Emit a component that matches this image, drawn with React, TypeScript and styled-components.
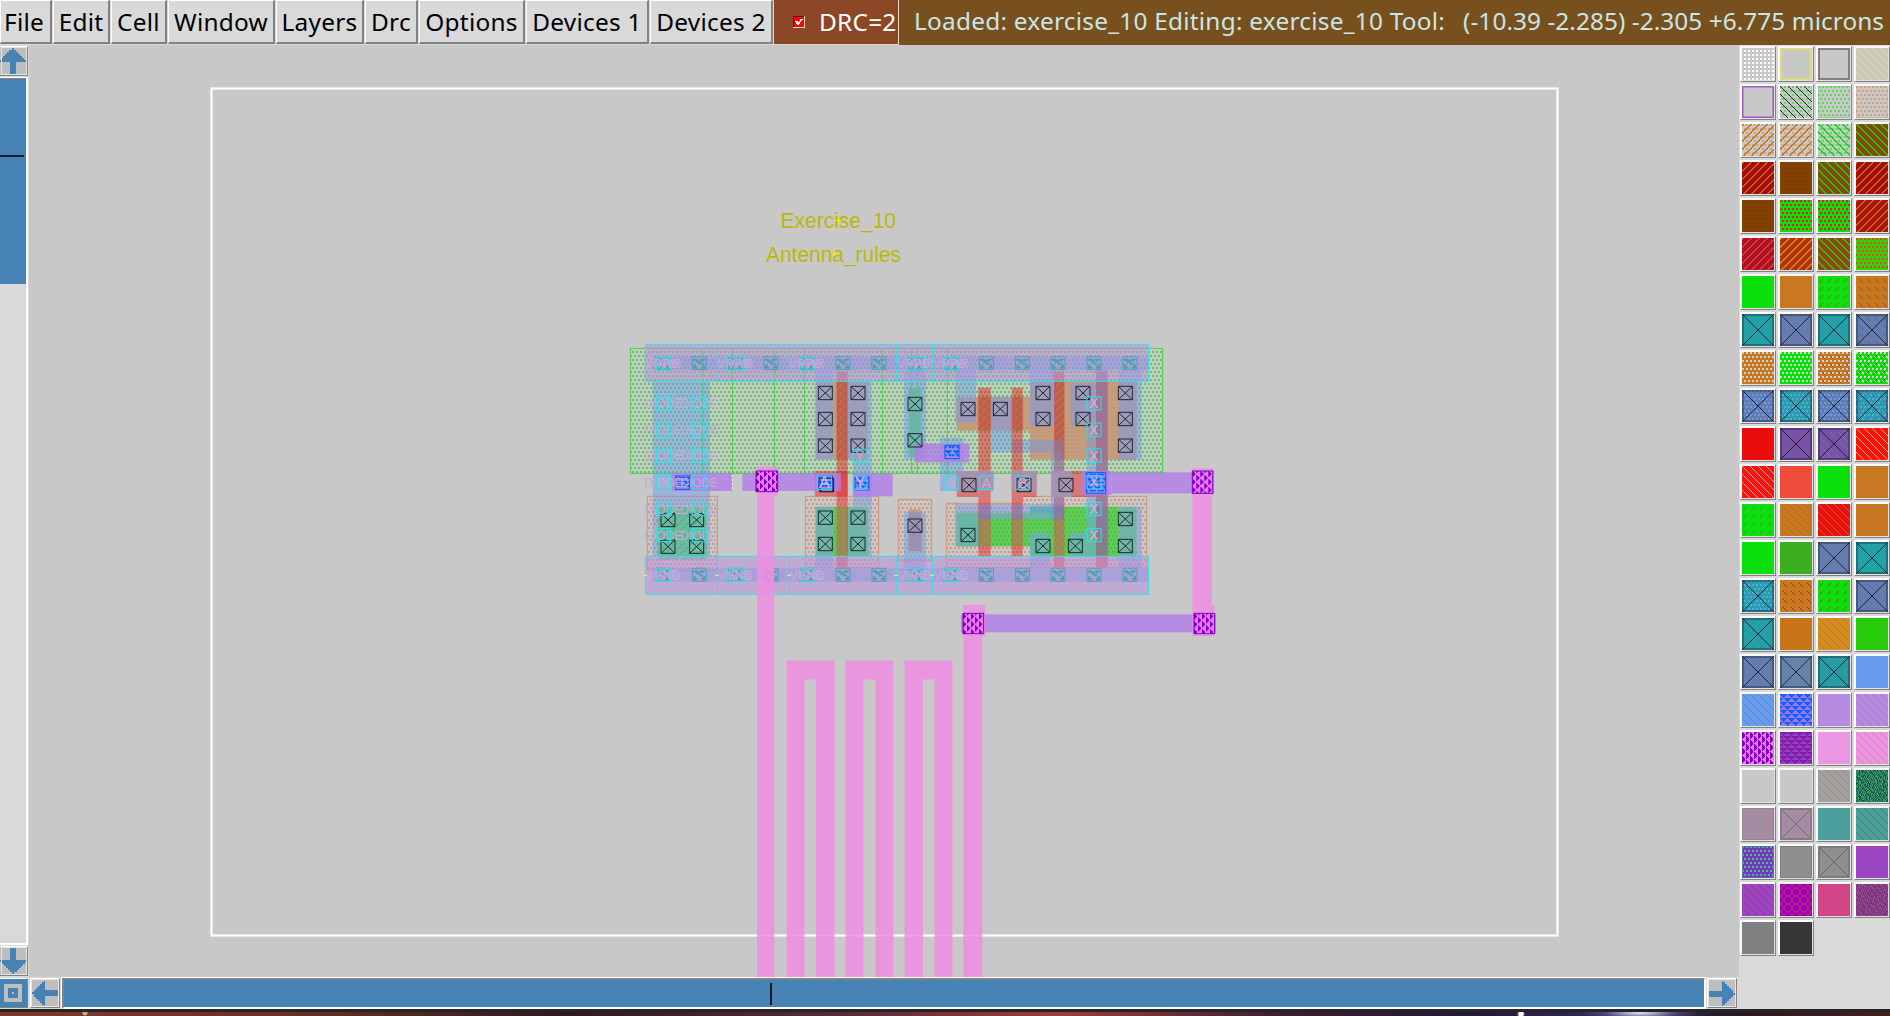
import React from 'react';
import styled, { createGlobalStyle } from 'styled-components';

const Global = createGlobalStyle`
  * { box-sizing: border-box; }
  body { margin: 0; overflow: hidden; background: #d9d9d9; }
`;
const Shell = styled.div`
  width: 1890px; height: 1016px; display: flex; flex-direction: column;
  font-family: "Noto Sans", "Open Sans", sans-serif; background: #d9d9d9;
`;
const MenuBar = styled.div`height: 45px; display: flex; flex: none; font-size: 24.4px; line-height: 42px; letter-spacing: 0.25px; white-space: pre;`;
const MenuButton = styled.div<{ $w: number }>`
  width: ${p => p.$w}px; height: 44px; display: flex; justify-content: center; color: #000; line-height: 41px;
  background: #d9d9d9; border: solid; border-width: 1px 2px 2px 1px;
  border-color: #fff #828282 #828282 #fff; margin-right: 1px;
  &:first-child { justify-content: flex-start; padding-left: 3px; }
`;
const DrcBox = styled.div`
  width: 125px; height: 45px; background: #8b4726; color: #fff; display: flex; align-items: center;
  padding: 0 0 1px 19px; gap: 14px; border-right: 1px solid #e8d8c8; border-bottom: 1px solid #e0d0c8;
`;
const Status = styled.div`flex: 1; height: 45px; background: #78501e; color: #c8e6e6; padding-left: 15px; display: flex;`;
const StatusText = styled.span<{ $gap?: number; $sp?: number }>`
  margin-left: ${p => p.$gap || 0}px; line-height: 42px; letter-spacing: ${p => p.$sp || 0}px;
`;
const Main = styled.div`height: 964px; display: flex;`;
const Left = styled.div`width: 1739px; display: flex; flex-direction: column;`;
const Upper = styled.div`height: 932px; display: flex; background: #c8c8c8;`;
const VBar = styled.div`width: 29px; display: flex; flex-direction: column; background: #d9d9d9;`;
const ArrowBox = styled.div<{ $w: number; $h: number }>`
  width: ${p => p.$w}px; height: ${p => p.$h}px; flex: none; background: #bebebe; border: solid; border-width: 1px 1px 1px 0;
  border-color: #fff #828282 #828282 #fff; outline: 1px solid #e6e6e6; outline-offset: -2px; display: flex;
`;
const VTrough = styled.div`
  width: 28px; height: 868px; flex: none; margin-top: 1px; border: solid #fff; border-width: 1px 2px 2px 0; background: #d9d9d9;
`;
const VThumb = styled.div`height: 206px; background: #4682b4; border-top: 1px solid #828282; padding-top: 76px;`;
const VMark = styled.div`height: 2px; width: 24px; background: #101820;`;
const Lower = styled.div`height: 32px; display: flex; align-items: center; background: #d9d9d9;`;
const HTrough = styled.div`
  width: 1646px; height: 31px; background: #4682b4; border: solid; border-width: 2px 1px 2px 2px;
  border-color: #828282 #fff #fff #828282; outline: 1px solid #fff; padding-left: 706px;
`;
const HMark = styled.div`width: 2px; height: 22px; margin-top: 3px; background: #101820;`;
const Palette = styled.div`
  width: 151px; display: grid; grid-template-columns: repeat(4, 36px); grid-auto-rows: 36px; gap: 2px;
  padding: 1px 0 0 1px; align-content: start; background: #d9d9d9; overflow: hidden;
`;
const Cell = styled.div`
  width: 36px; height: 36px; background: #e0e0e0; border: 1px solid; border-color: #fff #828282 #828282 #fff;
  box-shadow: inset 1px 1px 0 #f8f8f8; padding: 1px;
  svg { display: block; }
`;
const Desktop = styled.div`
  height: 7px; border-top: 3px solid #252528;
  background: radial-gradient(ellipse 60px 8px at 1640px 1px, #dfe4fa, #6458a088 60%, transparent),
    radial-gradient(circle at 1521px 2px, #fff 0 2px, transparent 4px),
    radial-gradient(circle at 85px 1px, #c8b078 0 2px, transparent 3px),
    linear-gradient(90deg, #7a3c2a, #6c3023 15%, #301820 30%, #5c2a38 45%, #9a4038 56%, #3c1c30 68%, #241838 78%, #342c60 86%, #281820 92%, #4a1e1c);
`;

/* ---------- palette swatches ---------- */
type Pred = (x: number, y: number) => boolean;
const m = (a: number, n: number) => ((a % n) + n) % n;
const preds: Record<string, Pred> = {
  grid: (x, y) => x > 1 && y > 1 && m(x, 4) > 1 && m(y, 4) > 1,
  dots: (x, y) => m(y, 4) < 2 && m(x + (m(y, 8) < 4 ? 0 : 2), 4) < 2,
  bs: (x, y) => m(x - y, 8) === 0,
  BS: (x, y) => m(x - y, 8) < 2,
  fs: (x, y) => m(x + y, 8) === 0,
  FS: (x, y) => m(x + y, 8) < 2,
  fd: (x, y) => m(x + y, 8) === 7 && m(y, 8) > 2 && m(y, 8) < 7,
  bd: (x, y) => m(x - y, 8) === 0 && m(y, 8) > 2 && m(y, 8) < 7,
  tri: (x, y) => { const r = m(y, 4); const c = m(x + (m(y, 8) < 4 ? 0 : 4), 8); return c >= r && c < 7 - r; },
  vtri: (x, y) => { const r = m(x, 4); const c = m(y + (m(x, 8) < 4 ? 0 : 4), 8); return r < 3 && c >= r && c < 7 - r; },
  weave: (x, y) => m(x * 3 + y * 5 + (x & y), 7) < 3 || (m(x - y, 6) === 0),
  ring: (x, y) => { const a = m(x, 8) - 3.5, b = m(y, 8) - 3.5, d = Math.abs(a) + Math.abs(b); return d > 2 && d < 5; },
  x: (x, y) => Math.abs(x - y) < 1 || Math.abs(x + y - 31) < 1,
  edge: (x, y) => x < 1 || y < 1 || x > 30 || y > 30,
  edge2: (x, y) => x < 2 || y < 2 || x > 29 || y > 29,
  lines: (_x, y) => m(y, 4) === 1,
};
const cache: Record<string, string> = {};
function pixels(kind: string): string {
  if (cache[kind]) return cache[kind];
  let d = '';
  for (let y = 0; y < 32; y++) {
    let s = -1;
    for (let x = 0; x <= 32; x++) {
      const on = x < 32 && preds[kind](x, y);
      if (on && s < 0) s = x;
      if (!on && s >= 0) { d += `M${s} ${y}h${x - s}v1h${s - x}z`; s = -1; }
    }
  }
  return (cache[kind] = d);
}
const G = '#0ce00c', O = '#c87820', T = '#22a2a6', S = '#667cae', X = 'edge2:#1a283866 x:#1a2838', B = '#c8c8c8';
const swatches: string[] = [
  `${B} grid:#fff`, `${B} edge2:#dcdc78`, `${B} edge2:#808080`, `${B} bs:#e6e650`,
  `${B} edge:#a050c8 edge2:#a064c899`, `${B} dots:#64d264 bs:#203020`, `${B} dots:#64d264 edge:#64d26480`, `${B} dots:#d2a078 edge:#d2a07880`,
  `${B} dots:#d2a078 FS:${O}`, `${B} dots:#d2a078 FS:${O}`, `${B} dots:#64d264 BS:${G}`, `#8c460a BS:#10d010`,
  `#a50c0c FS:#c86418`, `#804000 dots:#864408`, `#8c460a BS:#10d010`, `#a50c0c FS:#c86418`,
  `#804000 dots:#864408`, `${G} dots:#f01818`, `${G} dots:#f01818 fd:#704808`, `#aa140c FS:#c86418`,
  `#b40c28 FS:#c84830`, `#b4320c FS:#d08818`, `#964610 BS:#20c810`, `#32d20a dots:#f04020`,
  G, O, `${G} fd:#706010`, `${O} bd:#905020`,
  `${T} ${X}`, `${S} ${X}`, `${T} fd:#4080a0 ${X}`, `${S} bd:#5060a0 ${X}`,
  `${O} dots:#d0d0d0`, `${G} dots:#d0d0d0`, `${O} dots:#d0d0d0 bd:#905020`, `${G} dots:#d0d0d0 fd:#804020`,
  `${S} dots:#649cf0 ${X}`, `${T} dots:#649cf0 ${X}`, `${S} dots:#649cf0 bd:#4878c0 ${X}`, `${T} dots:#649cf0 fd:#7850b0 ${X}`,
  '#eb0c0c', '#7852a5 edge2:#28183c66 x:#28183c', '#7852a5 bs:#6878b0 edge2:#28183c66 x:#28183c', '#fa1408 bs:#e0b090',
  '#fa1408 bs:#a0b0d8', '#f04c3c', G, `${O} bd:#c27420`,
  `${G} fd:#20a818`, `${O} bd:#a86420`, '#eb1010 bs:#d06418', `${O} bs:#c07020`,
  G, '#40aa20 fs:#20c818', `${S} ${X}`, `${T} ${X}`,
  `${T} dots:#649cf0 ${X}`, `${O} bd:#904010`, `${G} fd:#805010`, `${S} bd:#5070a0 ${X}`,
  `${T} fd:#5070b0 ${X}`, '#c87418', '#d28c20 bs:#c47a20', '#26cc0c fs:#32c80c',
  `${S} ${X}`, `#6484aa ${X}`, `#289ca2 ${X}`, '#669ced',
  '#669ced bs:#6484b8', '#9878e8 tri:#1460ff', '#b78ae2', '#b78ae2 bs:#a478c0',
  '#e678f0 vtri:#8200c0', '#9840c8 tri:#8414b8 lines:#803090', '#eb96e2', '#eb96e2 bs:#e07ca8',
  B, B, '#a0a0a0 bs:#a88870', '#40908c weave:#106828',
  '#a48ca2 edge:#988298', '#a48ca2 x:#707070 edge2:#8c788c', '#4a9e9c', '#4a9e9c bs:#408860',
  '#743cb4 dots:#50b4a8 edge:#4c78b4', '#8e8e8e edge:#808080', '#8e8e8e x:#686868 edge2:#7c7c7c', '#9c46c4',
  '#9c46c4 bs:#a03080', '#9400b4 ring:#c01890', '#d24688', '#7c2898 weave:#8c5470',
  '#808080', '#363636',
];
function Swatch({ spec }: { spec: string }) {
  const [bg, ...layers] = spec.split(' ');
  return (
    <Cell>
      <svg width="32" height="32" shapeRendering="crispEdges">
        <rect width="32" height="32" fill={bg} />
        {layers.map((l, i) => { const [k, c] = l.split(':'); return <path key={i} d={pixels(k)} fill={c} />; })}
      </svg>
    </Cell>
  );
}

/* ---------- chip layout drawing; units are a third of a pixel ---------- */
const metal = 'rgba(100,150,240,.42)', poly = 'rgba(235,20,20,.45)', ndiff = 'rgba(10,210,10,.58)', pdiff = 'rgba(198,150,118,.9)';
const slate = 'rgba(154,154,190,.92)', teal = 'rgba(106,180,166,.95)', violet = 'rgba(178,124,232,.8)', mauve = 'rgba(165,146,178,.95)', pink = 'rgba(240,142,226,.86)';
type Box = [number, number, number, number, string];
const R = (dx: number, list: Box[]): Box[] => list.map(([a, b, c, d, f]) => [a + dx, b, c + dx, d, f]);
const shapes: Box[] = [
  [98, 139, 270, 664, metal], [113, 515, 260, 674, 'rgba(90,190,140,.7)'], [113, 515, 260, 674, 'url(#fsg)'],
  [640, 139, 683, 374, pdiff], [586, 139, 640, 374, slate], [680, 139, 745, 374, slate], [745, 139, 755, 374, metal],
  [586, 104, 640, 139, metal], [584, 408, 683, 484, poly],
  [638, 515, 683, 664, ndiff], [586, 515, 638, 664, teal], [680, 515, 745, 664, teal], [745, 515, 755, 664, metal], [699, 374, 755, 515, metal],
  [586, 664, 638, 697, metal], [650, 110, 683, 697, poly], [650, 139, 680, 374, 'url(#fso)'], [650, 515, 680, 664, 'url(#bsg)'],
  [155, 414, 337, 468, violet], [367, 414, 663, 468, violet], [699, 414, 818, 484, violet],
  ...R(780, [
    [72, 104, 138, 374, metal], [86, 160, 124, 364, teal], [180, 308, 250, 468, metal], [104, 326, 268, 382, violet],
    [225, 104, 288, 262, metal], [230, 186, 450, 287, pdiff], [450, 139, 770, 374, pdiff],
    [230, 186, 288, 262, slate], [332, 186, 398, 287, slate], [332, 287, 396, 352, metal], [396, 314, 550, 352, metal],
    [450, 139, 525, 272, slate], [450, 104, 525, 139, metal], [572, 145, 648, 272, slate], [716, 139, 770, 374, slate], [716, 104, 785, 139, metal], [770, 139, 785, 374, metal],
    [230, 535, 450, 634, ndiff], [450, 515, 716, 664, ndiff],
    [230, 535, 298, 634, teal], [298, 535, 457, 553, teal], [457, 515, 550, 553, teal], [450, 592, 508, 664, teal],
    [570, 592, 648, 664, teal], [620, 515, 680, 592, teal], [716, 515, 770, 664, teal], [770, 515, 785, 697, metal], [716, 664, 770, 697, metal],
    [225, 508, 230, 634, metal], [230, 508, 550, 535, metal], [450, 664, 508, 697, metal],
    [295, 158, 332, 664, poly], [395, 158, 428, 664, poly], [522, 110, 553, 697, poly], [648, 110, 683, 697, poly],
    [230, 408, 295, 486, poly], [428, 408, 470, 486, poly], [553, 408, 648, 486, poly],
    [295, 186, 332, 287, 'url(#fso)'], [398, 186, 428, 287, 'url(#fso)'], [525, 139, 553, 374, 'url(#fso)'],
    [298, 553, 332, 634, 'url(#bsg)'], [398, 553, 428, 634, 'url(#bsg)'], [522, 553, 553, 664, 'url(#bsg)'],
    [513, 352, 550, 553, metal], [522, 314, 550, 374, 'rgba(140,125,160,.6)'], [298, 508, 332, 553, metal], [398, 508, 428, 553, metal], [620, 272, 648, 515, metal], [648, 104, 683, 664, 'rgba(125,130,190,.62)'],
    [230, 408, 341, 468, mauve], [395, 408, 470, 468, mauve], [513, 408, 577, 486, mauve],
    [603, 408, 694, 480, violet], [694, 412, 937, 475, violet],
    [86, 523, 124, 648, pdiff], [72, 532, 138, 700, metal], [86, 532, 124, 648, 'rgba(150,140,175,.6)'],
    [243, 838, 1008, 892, violet],
  ]),
];
const xs: [number, number][] = [
  [144, 555], [230, 555], [144, 635], [230, 635], [616, 174], [714, 174], [616, 252], [714, 252], [616, 332], [714, 332],
  [616, 548], [714, 548], [616, 627], [714, 627], [620, 450],
  ...([[105, 207], [105, 316], [264, 222], [361, 222], [489, 174], [489, 252], [609, 174], [609, 252], [736, 174], [736, 252], [736, 332],
    [267, 450], [432, 450], [558, 450], [264, 600], [489, 633], [586, 633], [736, 552], [736, 633], [105, 572]] as [number, number][]).map(([a, b]) => [a + 780, b] as [number, number]),
];
const pinkShapes: Box[] = [
  [411, 395, 473, 482, pink], [411, 482, 463, 1926, pink],
  ...R(780, [[937, 400, 1000, 482, pink], [937, 482, 995, 810, pink], [937, 810, 1003, 903, pink], [249, 810, 316, 903, pink], [250, 903, 307, 1926, pink]]),
];
const cols = [130, 238, 346, 453, 561, 669, 777, 885, 993, 1099, 1207, 1314, 1422, 1530];
const named = [130, 346, 561, 885, 993];
const Rc = ({ b }: { b: Box }) => <rect x={b[0]} y={b[1]} width={b[2] - b[0]} height={b[3] - b[1]} fill={b[4]} />;
const Lab = ({ x, y, t, s = 36, c = '#c2acd8' }: { x: number; y: number; t: string; s?: number; c?: string }) => (
  <text x={x} y={y + s * 0.36} fontSize={s} fill={c} textAnchor="middle" fontFamily="Liberation Sans, Arial, sans-serif">{t}</text>
);
const Cyan = ({ x, y, w = 42 }: { x: number; y: number; w?: number }) => (
  <rect x={x - w / 2} y={y - 20} width={w} height="40" fill="none" stroke="#28e6e6" strokeWidth="3" />
);
const Via = ({ x, y, w, h, p, c }: { x: number; y: number; w: number; h: number; p: string; c: string }) => (
  <g transform={`translate(${x} ${y})`}><rect width={w} height={h} fill={`url(#${p})`} stroke={c} strokeWidth="3" /></g>
);
const BlueVia = ({ x, y, w = 42, h = 40 }: { x: number; y: number; w?: number; h?: number }) => (
  <Via x={x} y={y} w={w} h={h} p="vb" c="#0c5cff" />
);

function ChipCanvas() {
  return (
    <svg width="1710" height="932" viewBox="29 45 1710 932">
      <defs>
        <pattern id="dg" width="12" height="24" patternUnits="userSpaceOnUse"><path d="M0 0h6v6h-6zM6 12h6v6h-6z" fill="#50d050" /></pattern>
        <pattern id="do" width="12" height="24" patternUnits="userSpaceOnUse"><path d="M0 0h6v6h-6zM6 12h6v6h-6z" fill="#d29a80" /></pattern>
        <pattern id="fso" width="24" height="24" patternUnits="userSpaceOnUse"><rect width="24" height="24" fill="#b4604abb" /><path d="M0 24L24 0" stroke="#c07c48" strokeWidth="3" /></pattern>
        <pattern id="bsg" width="24" height="24" patternUnits="userSpaceOnUse"><rect width="24" height="24" fill="#b0886899" /><path d="M0 0L24 24" stroke="#58b850" strokeWidth="3" /></pattern>
        <pattern id="fsg" width="24" height="24" patternUnits="userSpaceOnUse"><path d="M0 24L24 0" stroke="#40b878" strokeWidth="3" /></pattern>
        <pattern id="vp" width="24" height="24" patternUnits="userSpaceOnUse"><rect width="24" height="24" fill="#e67cf0" /><path d="M0 0h3v3h3v3h3v6h-3v3h-3v3h-3zM12 12h3v3h3v3h3v6h-9zM12 0h6v3h-3v3h-3z" fill="#8200c8" /></pattern>
        <pattern id="vb" width="24" height="24" patternUnits="userSpaceOnUse"><rect width="24" height="24" fill="#8c96ee" /><path d="M0 3h6v3h-3v3h-3zM9 3h15v6h-3v-3h-3v3h-6v-3h-3zM0 15h21v3h-3v3h-3v3h-9v-3h-3v-3h-3z" fill="#0c5cff" /></pattern>
        <pattern id="vt" width="42" height="39" patternUnits="userSpaceOnUse"><path d="M3 6h12v3h3v3h3v-3h3v-3h15v3h-3v3h-3v3h-6v-3h-3v6h6v3h3v3h-12v-3h-3v-3h-6v-3h-3v-3h-6zM3 24h6v3h3v3h3v6h-12zM39 24h-6v3h-3v3h-3v6h12z" fill="#50a0ac" /></pattern>
      </defs>
      <rect x="211.5" y="88.5" width="1346" height="847" fill="none" stroke="#e4e4e4" strokeWidth="3" />
      <rect x="211.5" y="88.5" width="1346" height="847" fill="none" stroke="#fff" strokeWidth="1.4" />
      <g fill="#b9b90a" fontSize="22" fontFamily="Liberation Sans, Arial, sans-serif">
        <text x="780.5" y="228" textLength="115.5" lengthAdjust="spacingAndGlyphs">Exercise_10</text>
        <text x="766" y="262" textLength="135" lengthAdjust="spacingAndGlyphs">Antenna_rules</text>
      </g>
      <path d="M836 220.5h5M838.5 218v5M832 253.500h5M834.500 251v5" stroke="#f4f400" />
      <g transform="translate(620 335) scale(.333333)">
        <rect x="31" y="40" width="1597" height="375" fill="url(#dg)" stroke="#46d246" strokeWidth="3" />
        <path d="M248 40V415M337 40V415M463 40V415M553 40V415M787 40V415M875 40V415M892 40V415M982 40V415" stroke="#46d246" strokeWidth="3" />
        <g fill="url(#do)" stroke="#d2967a" strokeWidth="3">
          <path d="M82 484H292V706H82zM556 484H776V697H556zM835 493H935V677H835zM979 505H1208V484H1580V697H979z" />
        </g>
        {shapes.map((b, i) => <Rc key={i} b={b} />)}
        {[[28, 111, 65], [664, 114, 700]].map(([y, h, iy]) => (
          <g key={y}>
            <rect x="76" y={y} width="1510" height={h} fill="rgba(186,146,220,.55)" />
            <rect x="98" y={iy} width="1488" height="40" fill="rgba(135,145,232,.4)" />
            <path d={`M76 ${y}H1586V${y + h}H76zM292 ${y}v${h}M508 ${y}v${h}M829 ${y}v${h}M937 ${y}v${h}`} fill="none" stroke="#28e6e6" strokeWidth="3" />
            {cols.map(x => <Via key={x} x={x - 21} y={iy} w={42} h={39} p="vt" c="#50a0b4" />)}
            {named.map(x => <Cyan key={x} x={x} y={iy + 20} w={x === 346 || x === 885 ? 56 : 42} />)}
            {named.map(x => <Lab key={x} x={x} y={iy + 22} t={y < 100 ? 'VPWR' : 'VGND'} />)}
            {named.map(x => <Lab key={x} x={x + 10} y={iy + 20} t={y < 100 ? 'VPB' : 'VNB'} />)}
          </g>
        ))}
        <path d="M69 721h12M285 721h12M501 721h12M822 721h12M930 721h12" stroke="#f0f080" strokeWidth="3" />
        <path d="M337 420v48" stroke="#f4f4f4" strokeWidth="3" strokeDasharray="7 5" />
        {xs.map(([x, y], i) => <path key={i} d={`M${x - 21} ${y - 20}h42v40h-42zl42 40m0 -40l-42 40`} fill="none" stroke="#1c2830" strokeWidth="3" />)}
        {pinkShapes.map((b, i) => <Rc key={i} b={b} />)}
        <Via x={408} y={408} w={65} h={62} p="vp" c="#8200c8" />
        <Via x={1717} y={408} w={62} h={67} p="vp" c="#8200c8" />
        <Via x={1722} y={835} w={62} h={61} p="vp" c="#8200c8" />
        <Via x={1029} y={835} w={62} h={61} p="vp" c="#8200c8" />
        <BlueVia x={167} y={423} /><BlueVia x={595} y={423} /><BlueVia x={705} y={425} />
        <BlueVia x={975} y={331} /><BlueVia x={1399} y={413} w={58} h={62} />
        <path d="M600 430h40v40h-40z" fill="none" stroke="#1c2830" strokeWidth="3" />
        {[206, 285, 363, 443, 523, 601].map(y => (
          <g key={y}>
            <Lab x={130} y={y} t="DIODE" /><Lab x={238} y={y} t="DIODE" />
            <Cyan x={130} y={y - 1} /><Cyan x={238} y={y - 1} />
            <Lab x={1422} y={y - 1} t="X" s={42} c="#ceb6e0" /><Cyan x={1422} y={y - 1} />
          </g>
        ))}
        <Lab x={613} y={443} t="A" s={48} c="#d4bce8" /><Cyan x={613} y={443} />
        <Lab x={720} y={443} t="Y" s={48} c="#d4bce8" /><Cyan x={720} y={443} />
        <Lab x={720} y={363} t="Y" s={44} /><Cyan x={720} y={363} />
        <Lab x={993} y={443} t="A" s={42} /><Cyan x={993} y={443} />
        <Lab x={1099} y={443} t="A" s={42} /><Cyan x={1099} y={443} />
        <Lab x={1208} y={443} t="B" s={42} /><Cyan x={1208} y={443} />
      </g>
      <path d="M786.500 660.500h48v317h-18.500v-298h-11.500v298h-18zM845.500 660.500h48v317h-18v-298h-12v298h-18zM904.500 660.500h48v317h-18v-298h-11.500v298h-18.500z" fill={pink} />
    </svg>
  );
}

const Arrow = ({ dir }: { dir: number }) => (
  <svg width="27" height="27" viewBox="0 0 27 27" shapeRendering="crispEdges">
    <path transform={`rotate(${dir} 13.5 13.5)`} d="M13 0h2v2h2v2h2v2h2v2h2v2h2v2h2v2H17v13h-6V14H0v-2h2v-2h2V8h2V6h2V4h2V2h3z" fill="#4682b4" />
  </svg>
);
const VArrow = styled.div<{ $top: number; $ml: number }>`height: 27px; margin: ${p => p.$top}px 0 0 ${p => p.$ml}px;`;
const Pan = styled.div`width: 28px; height: 30px; margin-right: 2px; background: #4682b4; border: solid; border-width: 1px 1px 1px 0; border-color: #fff #828282 #828282 #fff; svg { display: block; }`;
const HArrow = styled(ArrowBox)<{ $ml?: number }>`
  border-left-width: 1px; margin: 0 2px 0 ${p => p.$ml || 0}px;
  svg { display: block; margin: 1px; }
`;
const VArrowBox = styled(ArrowBox)`margin-top: 1px;`;

export default function App() {
  const menu: [string, number][] = [['File', 52], ['Edit', 57], ['Cell', 56], ['Window', 107], ['Layers', 88], ['Drc', 53], ['Options', 106], ['Devices 1', 123], ['Devices 2', 123]];
  return (
    <>
      <Global />
      <Shell>
        <MenuBar>
          {menu.map(([t, w]) => <MenuButton key={t} $w={w}>{t}</MenuButton>)}
          <DrcBox>
            <svg width="12" height="12" shapeRendering="crispEdges">
              <rect width="12" height="12" fill="#e8d0c0" /><rect width="11" height="11" fill="#601808" /><rect x="1" y="1" width="10" height="10" fill="#f00" />
              <path d="M3 5l2 3 4-5" fill="none" stroke="#fff" strokeWidth="2" />
            </svg>
            <span>DRC=2</span>
          </DrcBox>
          <Status>
            <StatusText $sp={0.24}>Loaded: exercise_10 Editing: exercise_10 Tool:</StatusText>
            <StatusText $gap={18} $sp={0.06}>(-10.39 -2.285) -2.305 +6.775 microns</StatusText>
          </Status>
        </MenuBar>
        <Main>
          <Left>
            <Upper>
              <VBar>
                <VArrowBox $w={28} $h={30}><VArrow $top={1} $ml={-1}><Arrow dir={0} /></VArrow></VArrowBox>
                <VTrough><VThumb><VMark /></VThumb></VTrough>
                <VArrowBox $w={28} $h={30}><VArrow $top={0} $ml={0}><Arrow dir={180} /></VArrow></VArrowBox>
              </VBar>
              <ChipCanvas />
            </Upper>
            <Lower>
              <Pan>
                <svg width="27" height="28" shapeRendering="crispEdges">
                  <rect width="27" height="28" fill="#4682b4" /><rect x="4" y="5" width="18" height="18" fill="#bebebe" />
                  <rect x="8" y="9" width="10" height="10" fill="#4682b4" /><rect x="12" y="13" width="2" height="2" fill="#bebebe" />
                </svg>
              </Pan>
              <HArrow $w={30} $h={30}><Arrow dir={-90} /></HArrow>
              <HTrough><HMark /></HTrough>
              <HArrow $w={30} $h={30} $ml={2}><Arrow dir={90} /></HArrow>
            </Lower>
          </Left>
          <Palette>{swatches.map((s, i) => <Swatch key={i} spec={s} />)}</Palette>
        </Main>
        <Desktop />
      </Shell>
    </>
  );
}
